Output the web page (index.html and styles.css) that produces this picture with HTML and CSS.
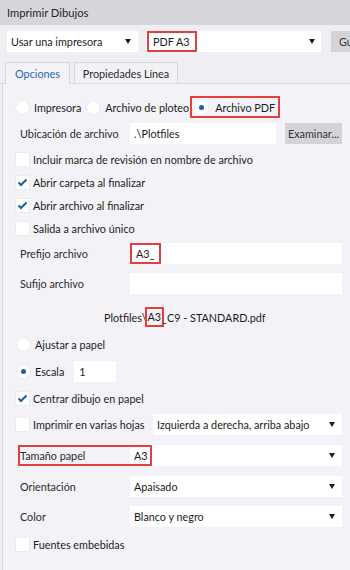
FILE: index.html
```
<!doctype html>
<html>
<head>
<meta charset="utf-8">
<title>Imprimir Dibujos</title>
<link rel="stylesheet" href="styles.css">
</head>
<body>
<div class="dialog">
	<div class="titlebar">Imprimir Dibujos</div>

	<div class="toolbar">
		<div class="combo combo-printer">
			<span class="value">Usar una impresora</span>
			<span class="arrow"></span>
		</div>
		<div class="combo combo-device">
			<span class="value marked">PDF A3</span>
			<span class="arrow"></span>
		</div>
		<div class="btn btn-save">Guardar</div>
	</div>

	<div class="tabs">
		<div class="tab tab-options active">Opciones</div>
		<div class="tab tab-lines">Propiedades Línea</div>
	</div>

	<div class="panel">
		<div class="row row-output">
			<label class="opt"><span class="radio"></span>Impresora</label>
			<label class="opt"><span class="radio"></span>Archivo de ploteo</label>
			<label class="opt opt-marked"><span class="radio on"></span>Archivo PDF</label>
		</div>

		<div class="row field-row row-location">
			<div class="label">Ubicación de archivo</div>
			<div class="field field-location">.\Plotfiles</div>
			<div class="btn btn-browse">Examinar...</div>
		</div>

		<div class="row check-row row-first-check">
			<span class="check"></span>Incluir marca de revisión en nombre de archivo
		</div>
		<div class="row check-row">
			<span class="check on"><svg viewBox="0 0 13 13"><polyline points="2.5,6.5 5,9 10.5,3.5"/></svg></span>Abrir carpeta al finalizar
		</div>
		<div class="row check-row">
			<span class="check on"><svg viewBox="0 0 13 13"><polyline points="2.5,6.5 5,9 10.5,3.5"/></svg></span>Abrir archivo al finalizar
		</div>
		<div class="row check-row">
			<span class="check"></span>Salida a archivo único
		</div>

		<div class="row field-row row-prefix">
			<div class="label">Prefijo archivo</div>
			<div class="field field-wide"><span class="value marked">A3_</span></div>
		</div>
		<div class="row field-row row-suffix">
			<div class="label">Sufijo archivo</div>
			<div class="field field-wide"></div>
		</div>

		<div class="row row-filename">
			Plotfiles\<span class="inline-mark">A3</span>_C9 - STANDARD.pdf
		</div>

		<div class="row radio-row row-fit">
			<span class="radio"></span>Ajustar a papel
		</div>
		<div class="row radio-row row-scale">
			<span class="radio on"></span>Escala
			<div class="field field-scale">1</div>
		</div>

		<div class="row check-row row-center">
			<span class="check on"><svg viewBox="0 0 13 13"><polyline points="2.5,6.5 5,9 10.5,3.5"/></svg></span>Centrar dibujo en papel
		</div>
		<div class="row check-row row-tiles">
			<span class="check"></span>Imprimir en varias hojas
			<div class="combo combo-tiles">
				<span class="value">Izquierda a derecha, arriba abajo</span>
				<span class="arrow"></span>
			</div>
		</div>

		<div class="row field-row row-paper">
			<div class="label">Tamaño papel</div>
			<div class="combo combo-field">
				<span class="value">A3</span>
				<span class="arrow"></span>
			</div>
			<div class="row-mark"></div>
		</div>
		<div class="row field-row row-orientation">
			<div class="label">Orientación</div>
			<div class="combo combo-field">
				<span class="value">Apaisado</span>
				<span class="arrow"></span>
			</div>
		</div>
		<div class="row field-row row-color">
			<div class="label">Color</div>
			<div class="combo combo-field">
				<span class="value">Blanco y negro</span>
				<span class="arrow"></span>
			</div>
		</div>

		<div class="row check-row row-fonts">
			<span class="check"></span>Fuentes embebidas
		</div>
	</div>
</div>
</body>
</html>
```

FILE: styles.css
```
html, body {
	margin: 0;
	padding: 0;
}
body {
	font-family: Lato, "Open Sans", sans-serif;
	font-size: 10.8px;
	color: #1b1b1b;
	background: #efeff3;
	overflow: hidden;
}
.dialog {
	width: 350px;
	height: 570px;
	overflow: hidden;
}

/* title */
.titlebar {
	height: 25px;
	line-height: 25px;
	padding-left: 7px;
	background: #d5d5da;
	color: #262626;
	font-size: 11.2px;
}

/* top selectors */
.toolbar {
	display: flex;
	margin-top: 6px;
	padding-left: 7px;
	height: 21px;
}
.combo {
	display: flex;
	align-items: center;
	height: 21px;
	background: #fff;
	padding: 0 7px 0 4px;
	box-sizing: border-box;
	flex-shrink: 0;
}
.combo .value {
	flex-grow: 1;
	line-height: 21px;
	white-space: nowrap;
}
.arrow {
	width: 0;
	height: 0;
	border-left: 3.5px solid transparent;
	border-right: 3.5px solid transparent;
	border-top: 5px solid #1e1e1e;
}
.combo-printer {
	width: 131px;
}
.combo-device {
	width: 175px;
	margin-left: 8px;
	padding-left: 1px;
	padding-right: 6px;
}
.combo-device .value {
	flex-grow: 0;
	margin-right: auto;
	padding: 0 6px;
	width: 38px;
}
.marked {
	box-shadow: inset 0 0 0 2px #e2403f;
}
.btn {
	height: 21px;
	line-height: 21px;
	background: #d3d3d8;
	color: #333;
	box-sizing: border-box;
	flex-shrink: 0;
}
.btn-save {
	margin-left: 10px;
	padding: 0 8px;
	width: 70px;
}

/* tabs */
.tabs {
	display: flex;
	margin-top: 10px;
	padding-left: 5px;
	height: 21px;
	border-bottom: 1px solid #dcdce0;
	position: relative;
}
.tab {
	height: 21px;
	line-height: 21px;
	text-align: center;
	box-sizing: border-box;
	border: 1px solid #d8d8dc;
	border-bottom: none;
	background: #f2f2f6;
	color: #2a2a2a;
}
.tab.active {
	color: #2a67ad;
	height: 22px;
	background: #f3f3f7;
}
.tab-options {
	width: 65px;
}
.tab-lines {
	width: 104px;
	margin-left: 4px;
}

/* main panel */
.panel {
	display: flex;
	flex-direction: column;
	margin-left: 2px;
	border-left: 1px solid #dcdce0;
	background: #f3f3f7;
	padding: 0 8px 0 13px;
	height: 500px;
}
.row {
	display: flex;
	align-items: center;
	flex-shrink: 0;
	white-space: nowrap;
	position: relative;
}
.field-row {
	height: 21px;
}
.check-row {
	height: 23px;
}
.radio-row {
	height: 22px;
}
.label {
	width: 110px;
	padding-left: 4px;
	flex-shrink: 0;
	color: #2a2a2a;
}
.field {
	height: 21px;
	line-height: 21px;
	background: #fff;
	box-sizing: border-box;
	padding-left: 4px;
}
.field-location {
	width: 146px;
}
.field-wide {
	flex-grow: 1;
	padding-left: 0;
}
.field-wide .value {
	display: inline-block;
	height: 21px;
	padding: 0 6px;
}
.field-scale {
	width: 42px;
	margin-left: 10px;
	padding-left: 5px;
}
.btn-browse {
	width: 57px;
	margin-left: 9px;
	text-align: center;
}
.combo-field {
	flex-grow: 1;
}
.combo-tiles {
	width: 189px;
	margin-left: auto;
}

/* radios and checkboxes */
.radio {
	width: 13px;
	height: 13px;
	border-radius: 50%;
	background: #fff;
	box-shadow: 0 0 0 0.5px #e4e4e8;
	margin-right: 5px;
	flex-shrink: 0;
	position: relative;
}
.radio.on::after {
	content: '';
	position: absolute;
	left: 4px;
	top: 4px;
	width: 5px;
	height: 5px;
	border-radius: 50%;
	background: #1c5ea8;
}
.check {
	width: 13px;
	height: 13px;
	background: #fff;
	box-shadow: 0 0 0 0.5px #e4e4e8;
	margin-right: 4px;
	flex-shrink: 0;
}
.check svg {
	display: block;
	width: 13px;
	height: 13px;
}
.check polyline {
	fill: none;
	stroke: #1c5ea8;
	stroke-width: 2;
}
.opt {
	display: flex;
	align-items: center;
	height: 22px;
	margin-right: 6px;
}
.opt-marked {
	margin-right: 0;
	margin-left: -5px;
	padding: 0 5px;
	box-shadow: inset 0 0 0 2px #e2403f;
}
.opt-marked .radio {
	margin-right: 7px;
	box-shadow: none;
}

/* vertical rhythm */
.row-output {
	margin-top: 12px;
}
.row-location {
	margin-top: 5px;
}
.row-first-check {
	margin-top: 4px;
}
.row-prefix {
	margin-top: 3px;
}
.row-suffix {
	margin-top: 9px;
}
.row-filename {
	margin-top: 12px;
	height: 22px;
	padding-left: 88px;
}
.inline-mark {
	display: inline-block;
	line-height: 16px;
	padding: 0 1px;
	box-shadow: 0 0 0 2px #e2403f;
}
.row-fit {
	margin-top: 5px;
	padding-left: 1px;
}
.row-fit .radio, .row-scale .radio {
	margin-right: 5px;
}
.row-scale {
	margin-top: 6px;
	height: 21px;
	padding-left: 1px;
}
.row-center {
	margin-top: 5px;
}
.row-tiles {
	margin-top: 4px;
	height: 21px;
}
.row-paper {
	margin-top: 10px;
}
.row-mark {
	position: absolute;
	left: 2px;
	top: 0;
	width: 134px;
	height: 21px;
	box-sizing: border-box;
	border: 2px solid #e2403f;
}
.row-orientation {
	margin-top: 10px;
}
.row-color {
	margin-top: 9px;
}
.row-fonts {
	margin-top: 6px;
}
```
